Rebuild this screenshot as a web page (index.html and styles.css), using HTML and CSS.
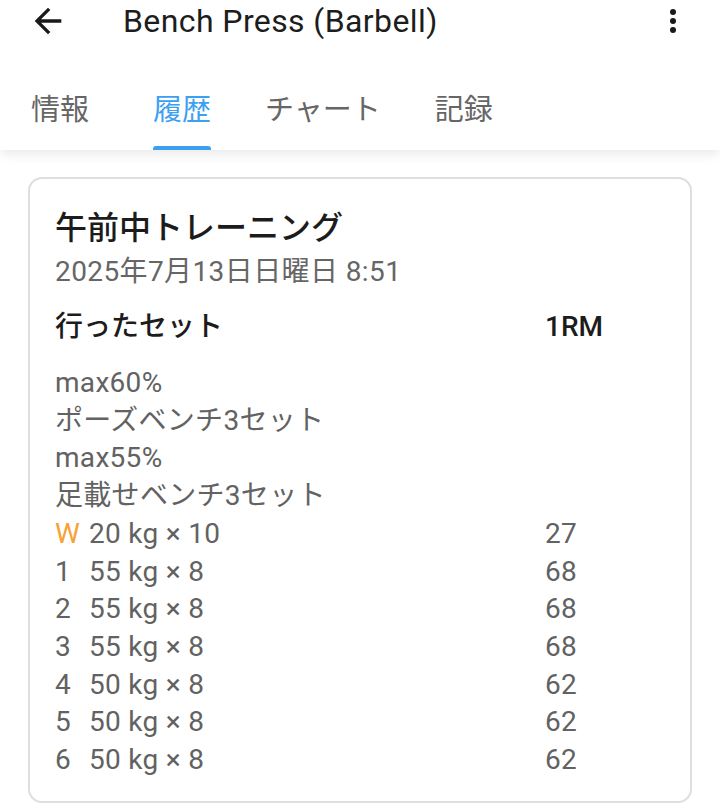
FILE: index.html
```html
<!DOCTYPE html>
<html lang="ja">
<head>
<meta charset="utf-8">
<title>Bench Press (Barbell)</title>
<link rel="stylesheet" href="styles.css">
</head>
<body>
<header class="header">
  <div class="appbar">
    <button class="icon-btn back" aria-label="戻る">
      <svg viewBox="0 0 24 24" width="40" height="40"><path d="M20 11H7.83l5.59-5.59L12 4l-8 8 8 8 1.41-1.41L7.83 13H20v-2z" fill="#1a1a1a"/></svg>
    </button>
    <h1 class="title">Bench Press (Barbell)</h1>
    <button class="icon-btn more" aria-label="メニュー">
      <svg viewBox="0 0 24 24" width="36" height="36"><circle cx="12" cy="6" r="2" fill="#1a1a1a"/><circle cx="12" cy="12" r="2" fill="#1a1a1a"/><circle cx="12" cy="18" r="2" fill="#1a1a1a"/></svg>
    </button>
  </div>
  <nav class="tabs">
    <div class="tab"><span class="tab-label">情報</span></div>
    <div class="tab active"><span class="tab-label">履歴</span></div>
    <div class="tab"><span class="tab-label">チャート</span></div>
    <div class="tab"><span class="tab-label">記録</span></div>
  </nav>
</header>

<main class="content">
  <section class="card">
    <h2 class="card-title">午前中トレーニング</h2>
    <div class="card-date">2025年7月13日日曜日 8:51</div>
    <div class="sets">
      <div class="sets-head">行ったセット</div>
      <div class="sets-head rm">1RM</div>

      <div class="note">max60%</div>
      <div class="note">ポーズベンチ3セット</div>
      <div class="note">max55%</div>
      <div class="note">足載せベンチ3セット</div>

      <div class="set"><span class="idx warm">W</span><span>20 kg × 10</span></div>
      <div class="rmv">27</div>
      <div class="set"><span class="idx">1</span><span>55 kg × 8</span></div>
      <div class="rmv">68</div>
      <div class="set"><span class="idx">2</span><span>55 kg × 8</span></div>
      <div class="rmv">68</div>
      <div class="set"><span class="idx">3</span><span>55 kg × 8</span></div>
      <div class="rmv">68</div>
      <div class="set"><span class="idx">4</span><span>50 kg × 8</span></div>
      <div class="rmv">62</div>
      <div class="set"><span class="idx">5</span><span>50 kg × 8</span></div>
      <div class="rmv">62</div>
      <div class="set"><span class="idx">6</span><span>50 kg × 8</span></div>
      <div class="rmv">62</div>
    </div>
  </section>
</main>
</body>
</html>
```

FILE: styles.css
```css
* { box-sizing: border-box; }

html, body {
  margin: 0;
  padding: 0;
  background: #ffffff;
}

body {
  font-family: Roboto, "Noto Sans CJK JP", sans-serif;
  color: #1c1c1c;
}

.header {
  background: #ffffff;
  box-shadow: 0 3px 12px rgba(0, 0, 0, 0.10);
  position: relative;
  z-index: 1;
}

.appbar {
  height: 42px;
  display: flex;
  align-items: center;
}

.icon-btn {
  background: none;
  border: 0;
  padding: 0;
  display: flex;
  align-items: center;
  justify-content: center;
}

.back {
  margin-left: 28px;
  width: 40px;
  height: 40px;
}

.title {
  margin: 0 0 0 55px;
  font-size: 32px;
  letter-spacing: 0.4px;
  font-weight: 400;
  line-height: 42px;
  color: #1d1d1d;
  flex: 1;
}

.more {
  width: 36px;
  height: 36px;
  margin-right: 29px;
}

.tabs {
  display: flex;
  margin-top: 48px;
  padding-left: 31px;
  gap: 54px;
}

.tab {
  font-size: 29px;
  line-height: 40px;
  color: #666666;
  padding-bottom: 20px;
  position: relative;
}

.tab:first-child {
  margin-right: 10px;
}

.tab-label {
  display: block;
}

.tab.active {
  color: #3d9ff0;
}

.tab.active::after {
  content: "";
  position: absolute;
  left: 0;
  right: 0;
  bottom: 0;
  height: 4px;
  border-radius: 3px 3px 0 0;
  background: #3d9ff0;
}

.content {
  padding: 27px 28px 0 28px;
}

.card {
  border: 2px solid #dedede;
  border-radius: 14px;
  padding: 27px 25px 22px 25px;
}

.card-title {
  margin: 0;
  font-size: 32px;
  font-weight: 500;
  line-height: 44px;
  color: #1c1c1c;
}

.card-date {
  font-size: 28px;
  letter-spacing: 0.4px;
  line-height: 44px;
  color: #666666;
}

.sets {
  margin-top: 11px;
  display: grid;
  grid-template-columns: 490px 1fr;
  font-size: 28px;
  letter-spacing: 0.3px;
  color: #626262;
  line-height: 37.7px;
}

.sets-head {
  line-height: 44px;
  font-size: 28px;
  letter-spacing: 0;
  font-weight: 500;
  color: #1c1c1c;
  margin-bottom: 15px;
}

.note {
  grid-column: 1 / -1;
}

.set {
  display: flex;
}

.idx {
  width: 34px;
  flex: none;
}

.warm {
  color: #f7a136;
}

.rmv {
  color: #626262;
}
```
